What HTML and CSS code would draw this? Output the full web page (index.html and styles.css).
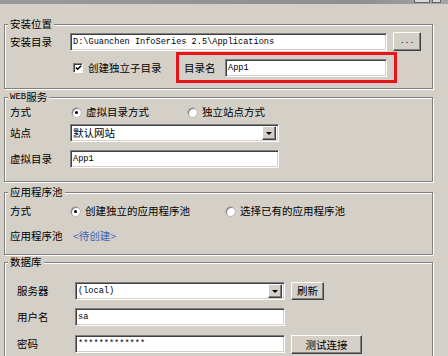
FILE: index.html
```html
<!DOCTYPE html>
<html lang="zh-CN">

<head>
    <meta charset="UTF-8">
    <meta name="viewport" content="width=device-width, initial-scale=1.0">
    <title>安装设置</title>
    <link rel="stylesheet" href="styles.css">
</head>

<body>
    <div class="titlebar">
        <span class="tb-btn"></span>
        <span class="tb-btn small"></span>
    </div>

    <!-- 安装位置 -->
    <fieldset class="group g-install">
        <legend>安装位置</legend>
        <div class="row">
            <span class="lbl">安装目录</span>
            <div class="field mono w-path">D:\Guanchen InfoSeries 2.5\Applications</div>
            <button class="btn browse">...</button>
        </div>
        <div class="row sub-row">
            <span class="check">
                <svg width="8" height="8" viewBox="0 0 8 8"><polyline points="1,3.5 3,5.5 7,1.5" fill="none" stroke="#000" stroke-width="1.6"/></svg>
            </span>
            <span class="check-text">创建独立子目录</span>
            <div class="mark">
                <span class="mark-lbl">目录名</span>
                <div class="field mono w-sub">App1</div>
            </div>
        </div>
    </fieldset>

    <!-- WEB服务 -->
    <fieldset class="group g-web">
        <legend><span class="latin">WEB</span>服务</legend>
        <div class="row">
            <span class="lbl">方式</span>
            <span class="opt w-web"><span class="radio on"></span>虚拟目录方式</span>
            <span class="opt"><span class="radio"></span>独立站点方式</span>
        </div>
        <div class="row r-site">
            <span class="lbl">站点</span>
            <div class="field combo w-web-field">
                <span class="combo-val">默认网站</span>
                <span class="arrow"></span>
            </div>
        </div>
        <div class="row r-vdir">
            <span class="lbl">虚拟目录</span>
            <div class="field mono w-web-field">App1</div>
        </div>
    </fieldset>

    <!-- 应用程序池 -->
    <fieldset class="group g-pool">
        <legend>应用程序池</legend>
        <div class="row">
            <span class="lbl">方式</span>
            <span class="opt w-pool"><span class="radio on"></span>创建独立的应用程序池</span>
            <span class="opt"><span class="radio"></span>选择已有的应用程序池</span>
        </div>
        <div class="row r-poolname">
            <span class="lbl">应用程序池</span>
            <span class="link">&lt;待创建&gt;</span>
        </div>
    </fieldset>

    <!-- 数据库 -->
    <fieldset class="group g-db">
        <legend>数据库</legend>
        <div class="row">
            <span class="lbl db-lbl">服务器</span>
            <div class="field combo w-db">
                <span class="combo-val mono">(local)</span>
                <span class="arrow"></span>
            </div>
            <button class="btn refresh">刷新</button>
        </div>
        <div class="row r-user">
            <span class="lbl db-lbl">用户名</span>
            <div class="field mono w-db">sa</div>
        </div>
        <div class="row r-pass">
            <span class="lbl db-lbl">密码</span>
            <div class="field mono w-db">*************</div>
            <button class="btn test">测试连接</button>
        </div>
    </fieldset>
</body>

</html>
```

FILE: styles.css
```css
* {
    margin: 0;
    padding: 0;
    box-sizing: border-box;
}

html,
body {
    overflow: hidden;
}

body {
    width: 448px;
    height: 356px;
    background-color: #d4d0c8;
    font-family: "Noto Sans CJK SC", sans-serif;
    font-size: 10.5px;
    line-height: 12px;
    color: #000;
}

.titlebar {
    height: 4px;
    display: flex;
    justify-content: flex-end;
    padding-right: 7px;
    background: linear-gradient(to right, #9a9a9a, #8e8e8e 80%, #a6a6a6);
}

.tb-btn {
    width: 16px;
    height: 3px;
    margin-left: 2px;
    background-color: #d8d8d8;
    border: 1px solid #666;
    border-top: 0;
}

.tb-btn.small {
    width: 9px;
}

/* group boxes */
.group {
    margin: 0 15px 0 4px;
    border: 1px solid #808080;
    box-shadow: 1px 1px 0 #fff, inset 1px 1px 0 #fff;
    padding: 0 6px 0 5px;
}

.group legend {
    height: 12px;
    margin-left: -2px;
    padding: 0 2px;
    line-height: 12px;
    background-color: #d4d0c8;
    display: flex;
    align-items: center;
}

.latin {
    font-family: "Liberation Mono", monospace;
    font-size: 9px;
}

.g-install {
    margin-top: 14px;
    padding-top: 2px;
    padding-bottom: 5px;
}

.g-web {
    margin-top: 2px;
    padding-bottom: 13px;
}

.g-pool {
    margin-top: 4px;
    padding-top: 4px;
    padding-bottom: 9px;
}

.g-db {
    margin-top: 1px;
    padding-top: 14px;
    padding-bottom: 20px;
}

/* rows */
.row {
    display: flex;
    align-items: center;
    min-height: 18px;
}

.lbl {
    width: 60px;
    flex-shrink: 0;
}

.db-lbl {
    width: 58px;
    margin-left: 7px;
}

.sub-row {
    margin-top: 1px;
    padding-left: 63px;
}

.r-site {
    margin-top: 3px;
}

.r-vdir {
    margin-top: 8px;
}

.r-poolname {
    margin-top: 7px;
}

.r-user {
    margin-top: 8px;
}

.r-pass {
    margin-top: 7px;
}

/* sunken edit fields */
.field {
    height: 18px;
    background-color: #fff;
    border: 1px solid;
    border-color: #808080 #fff #fff #808080;
    box-shadow: inset 1px 1px 0 #404040, inset -1px -1px 0 #d4d0c8;
    padding: 0 2px;
    display: flex;
    align-items: center;
    white-space: nowrap;
    overflow: hidden;
}

.mono {
    font-family: "Liberation Mono", monospace;
    font-size: 8.6px;
}

.w-path {
    width: 317px;
}

.w-sub {
    width: 162px;
}

.w-web-field {
    width: 209px;
}

.w-db {
    width: 210px;
}

.combo {
    padding-right: 2px;
}

.combo-val {
    flex: 1;
}

.arrow {
    width: 14px;
    height: 14px;
    background-color: #d4d0c8;
    border: 1px solid;
    border-color: #fff #404040 #404040 #fff;
    box-shadow: inset -1px -1px 0 #808080;
    display: flex;
    align-items: center;
    justify-content: center;
}

.arrow::after {
    content: "";
    border-left: 3px solid transparent;
    border-right: 3px solid transparent;
    border-top: 3px solid #000;
    margin-top: 1px;
}

/* raised buttons */
.btn {
    height: 19px;
    background-color: #d4d0c8;
    border: 1px solid;
    border-color: #fff #404040 #404040 #fff;
    box-shadow: inset -1px -1px 0 #808080;
    font-family: "Noto Sans CJK SC", sans-serif;
    font-size: 10.5px;
    line-height: 12px;
    color: #000;
}

.browse {
    width: 28px;
    margin-left: 6px;
    font-family: "Liberation Mono", monospace;
    font-size: 8px;
    padding-bottom: 2px;
}

.refresh {
    width: 33px;
    height: 18px;
    margin-left: 6px;
}

.test {
    width: 71px;
    margin-left: 6px;
    margin-top: 2px;
}

/* checkbox and radios */
.check {
    width: 10px;
    height: 10px;
    background-color: #fff;
    border: 1px solid;
    border-color: #808080 #fff #fff #808080;
    box-shadow: inset 1px 1px 0 #404040;
    display: flex;
    align-items: center;
    justify-content: center;
}

.check svg {
    margin: 1px 0 0 1px;
}

.check-text {
    width: 88px;
    margin-left: 5px;
}

.mark {
    display: flex;
    align-items: center;
    height: 31px;
    border: 3px solid #e8141a;
    padding: 0 7px 0 5px;
}

.mark-lbl {
    width: 41px;
}

.opt {
    display: flex;
    align-items: center;
}

.w-web {
    width: 116px;
    margin-left: 2px;
}

.w-pool {
    width: 155px;
    margin-left: 1px;
}

.radio {
    width: 9px;
    height: 9px;
    margin-right: 5px;
    border-radius: 50%;
    background-color: #fff;
    box-shadow: inset 1px 1px 0 #808080, 0 0 0 0.5px #a0a0a0;
    display: flex;
    align-items: center;
    justify-content: center;
}

.radio.on::after {
    content: "";
    width: 3px;
    height: 3px;
    border-radius: 50%;
    background-color: #000;
}

.link {
    margin-left: 3px;
    color: #3d66b5;
}
```
